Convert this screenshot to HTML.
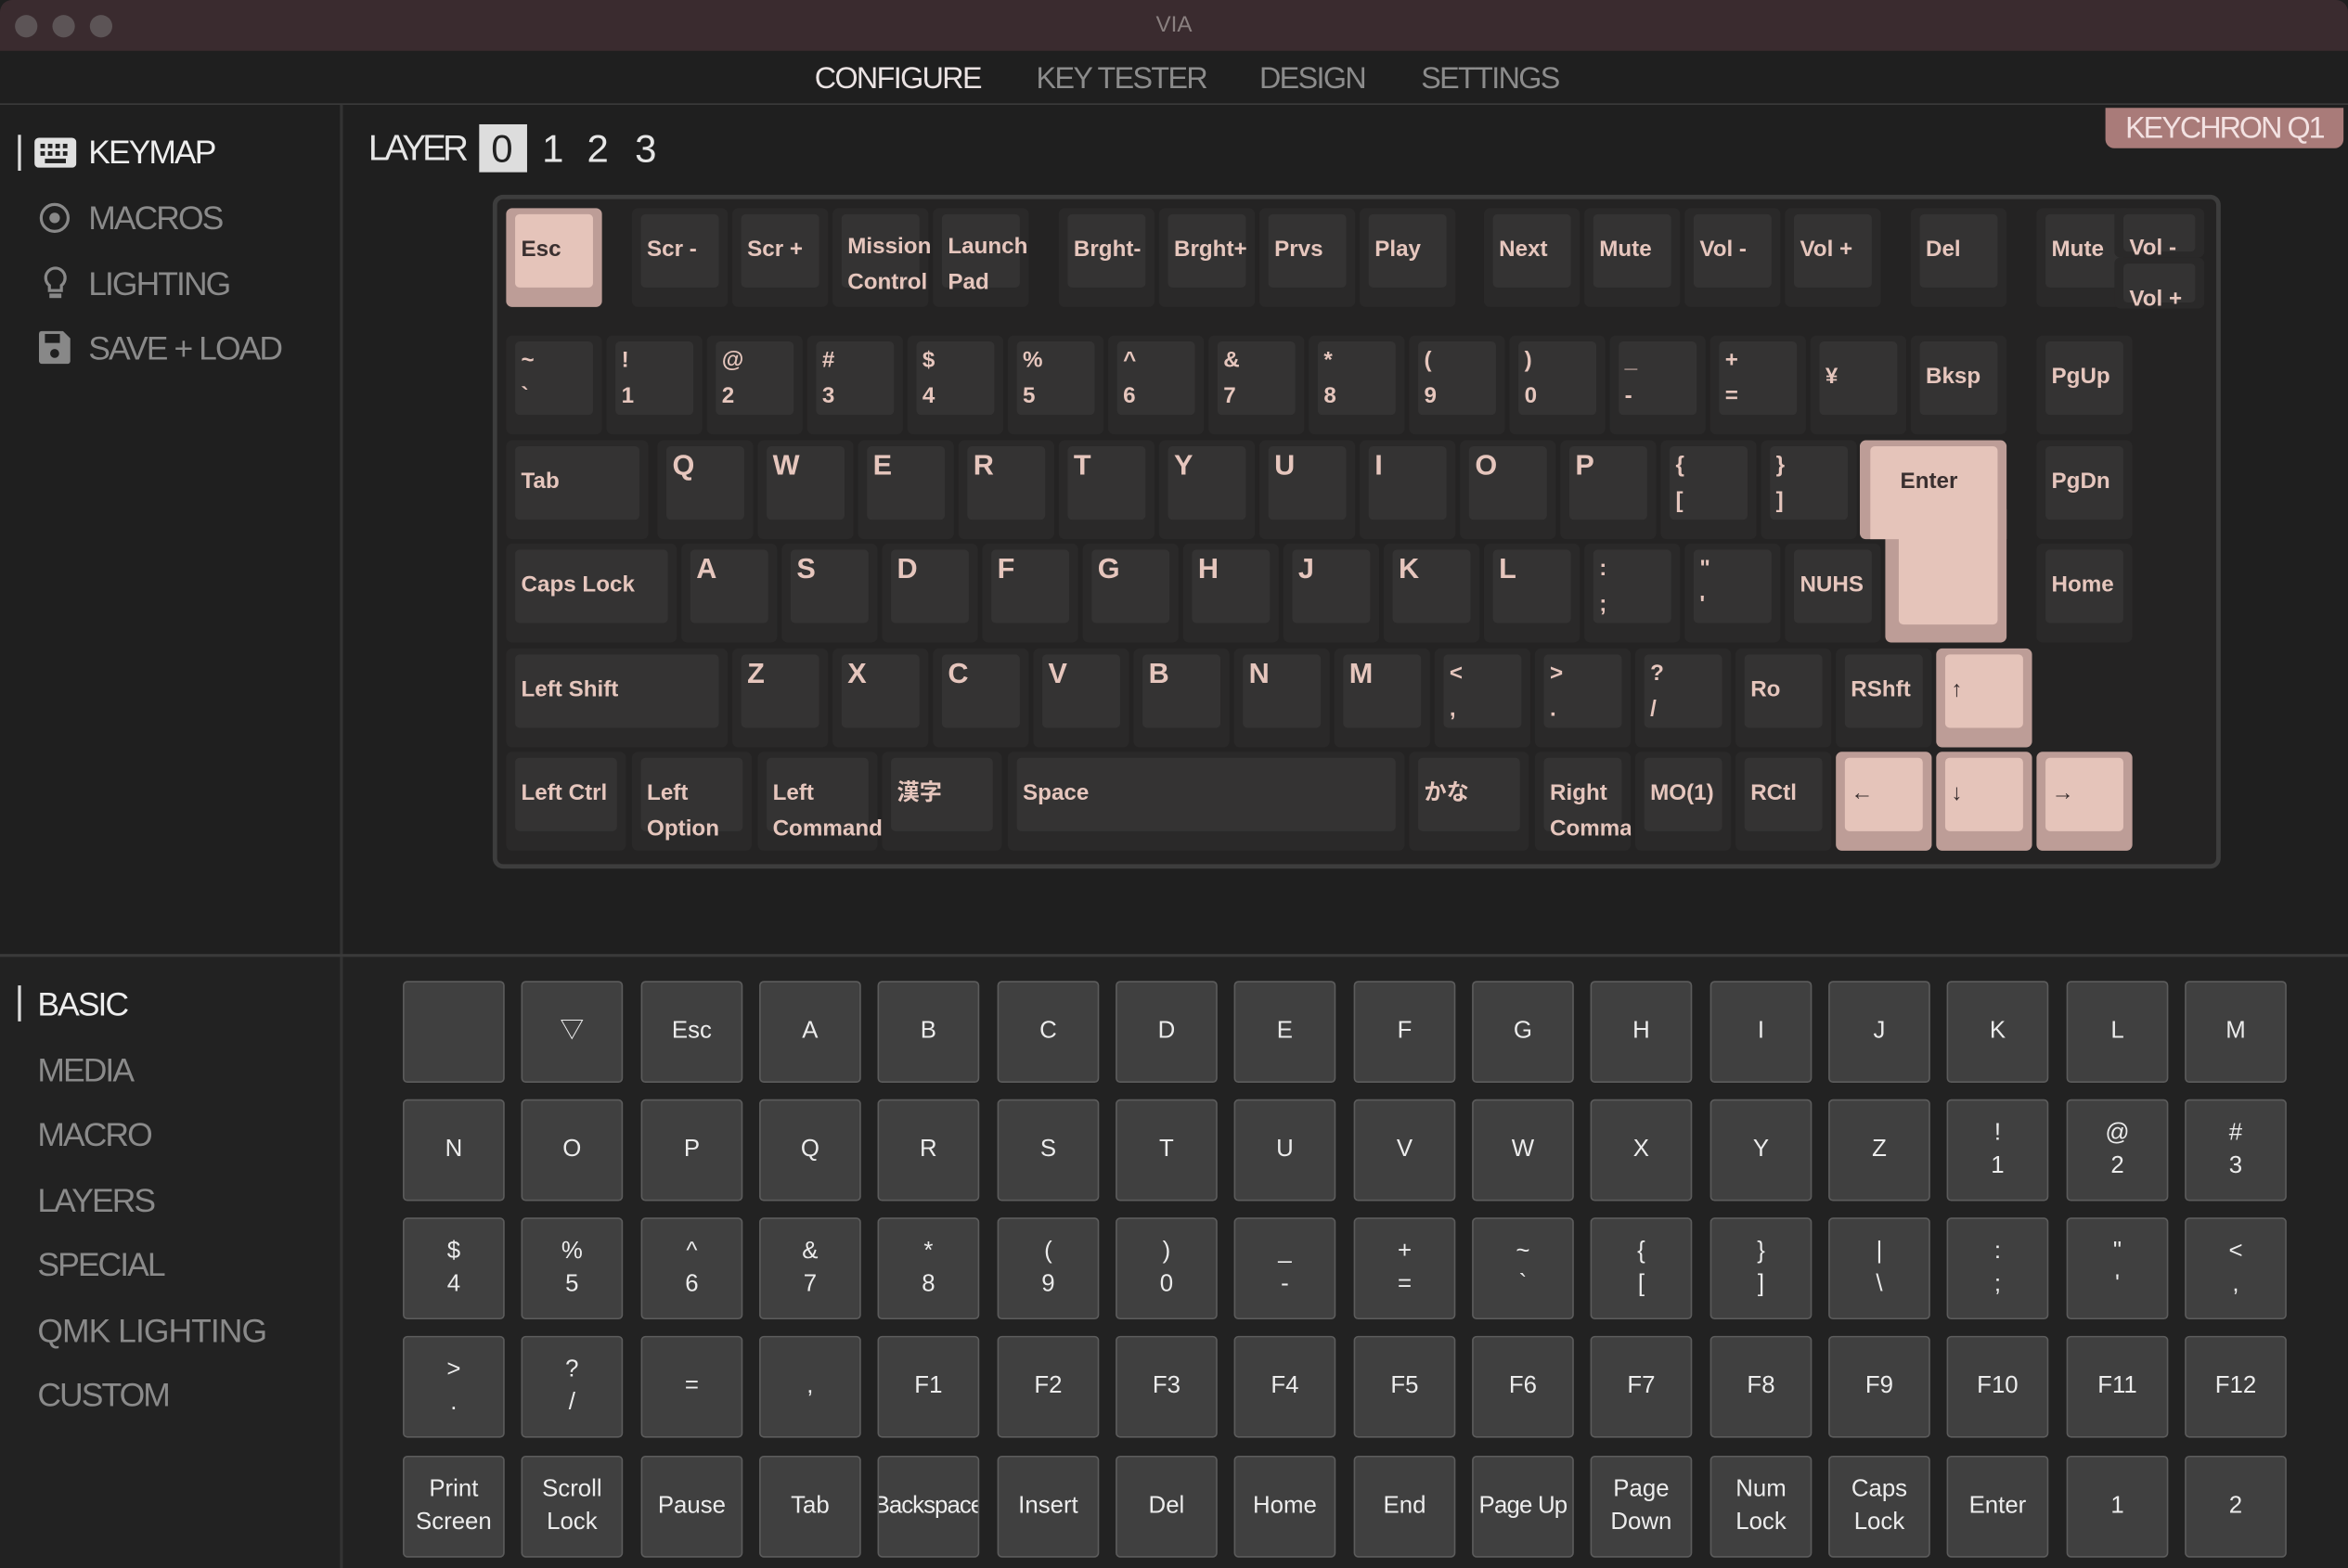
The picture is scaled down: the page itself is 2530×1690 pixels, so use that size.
<!DOCTYPE html>
<html><head><meta charset="utf-8"><style>
*{margin:0;padding:0;box-sizing:border-box}
html,body{width:2530px;height:1690px;overflow:hidden;background:#1e1e1e}
#w{position:absolute;left:0;top:0;width:1568px;height:1047px;transform:scale(1.61352,1.61414);transform-origin:0 0;font-family:"Liberation Sans","Noto Sans CJK JP",sans-serif;background:#1f1f1f}
.a{position:absolute}
.tb{left:0;top:0;width:1568px;height:34px;background:#3a2b2f;border-radius:8px 8px 0 0}
.dot{width:15px;height:15px;border-radius:50%;background:#5c5456;top:10px}
.nav{top:42px;font-size:20px;color:#8c8c8c;letter-spacing:-1px}
.side{font-size:22px;color:#8a8a8a;letter-spacing:-1.2px}
.k{position:absolute;height:66px;background:#2a2929;border-radius:4px}
.k>b{position:absolute;left:6px;right:6px;top:4px;bottom:13px;background:#343333;border-radius:3px}
.k>s{position:absolute;left:10px;text-decoration:none;color:#e6c6bd;font-weight:bold;font-size:15px;white-space:nowrap}
.k>s.c{top:18px;line-height:20px}
.k>s.d{top:5px;line-height:24px}
.k>s.l{top:7px;font-size:19px;line-height:22px}
.k.h{background:#bd9d97}.k.h>b{background:#e5c4ba}.k.h>s{color:#3a3030}
.g{position:absolute;width:68px;height:68px;background:#404040;border:1.5px solid #5c5c5c;border-radius:3px;color:#ececec;font-size:16px;display:flex;align-items:center;justify-content:center;text-align:center;line-height:22px}
</style></head><body><div id="w">
<div class="a tb"></div>
<div class="a dot" style="left:10px"></div><div class="a dot" style="left:35px"></div><div class="a dot" style="left:60px"></div>
<div class="a" style="left:0;width:1568px;top:8px;text-align:center;color:#8a8080;font-size:15px">VIA</div>
<div class="a" style="left:0;top:34px;width:1568px;height:36px;background:#1f1f1f;border-bottom:1.5px solid #3a3a3a"></div>
<div class="a nav" style="left:544px;color:#ebe3e3">CONFIGURE</div>
<div class="a nav" style="left:692px">KEY TESTER</div>
<div class="a nav" style="left:841px">DESIGN</div>
<div class="a nav" style="left:949px">SETTINGS</div>
<div class="a" style="left:227px;top:70px;width:1.5px;height:977px;background:#333"></div>
<div class="a" style="left:0;top:637px;width:1568px;height:1.5px;background:#3a3a3a"></div>
<div class="a" style="left:0;top:639px;width:1568px;height:408px;background:#222"></div>
<div class="a" style="left:227px;top:639px;width:1.5px;height:408px;background:#333"></div>
<!-- top sidebar -->
<div class="a" style="left:12px;top:90px;width:2px;height:24px;background:#ddd"></div>
<svg class="a" style="left:23px;top:92px" width="28" height="20" viewBox="0 0 28 20"><rect x="0" y="0" width="28" height="20" rx="3" fill="#e0e0e0"/><g fill="#222"><rect x="4" y="4" width="3" height="3"/><rect x="9" y="4" width="3" height="3"/><rect x="14" y="4" width="3" height="3"/><rect x="19" y="4" width="3" height="3"/><rect x="4" y="9" width="3" height="3"/><rect x="9" y="9" width="3" height="3"/><rect x="14" y="9" width="3" height="3"/><rect x="19" y="9" width="3" height="3"/><rect x="7" y="14" width="14" height="3"/></g></svg>
<div class="a side" style="left:59px;top:89px;color:#eee">KEYMAP</div>
<svg class="a" style="left:26px;top:135px" width="21" height="21" viewBox="0 0 21 21"><circle cx="10.5" cy="10.5" r="9" fill="none" stroke="#888" stroke-width="2"/><circle cx="10.5" cy="10.5" r="3.5" fill="#888"/></svg>
<div class="a side" style="left:59px;top:133px">MACROS</div>
<svg class="a" style="left:28px;top:177px" width="18" height="24" viewBox="0 0 18 24"><path d="M9 2a6.5 6.5 0 0 0-4 11.6V17h8v-3.4A6.5 6.5 0 0 0 9 2z" fill="none" stroke="#888" stroke-width="2"/><rect x="5" y="19" width="8" height="3" fill="#888"/></svg>
<div class="a side" style="left:59px;top:177px">LIGHTING</div>
<svg class="a" style="left:26px;top:221px" width="21" height="22" viewBox="0 0 21 22"><path d="M0 2a2 2 0 0 1 2-2h14l5 5v15a2 2 0 0 1-2 2H2a2 2 0 0 1-2-2z" fill="#888"/><rect x="4" y="2" width="10" height="6" fill="#1f1f1f"/><circle cx="10.5" cy="15" r="3" fill="#1f1f1f"/></svg>
<div class="a side" style="left:59px;top:220px">SAVE + LOAD</div>
<!-- bottom sidebar -->
<div class="a" style="left:12px;top:658px;width:2px;height:24px;background:#ddd"></div>
<div class="a side" style="left:25px;top:658px;color:#eee">BASIC</div>
<div class="a side" style="left:25px;top:702px">MEDIA</div>
<div class="a side" style="left:25px;top:745px">MACRO</div>
<div class="a side" style="left:25px;top:789px">LAYERS</div>
<div class="a side" style="left:25px;top:832px">SPECIAL</div>
<div class="a side" style="left:25px;top:876px;letter-spacing:-.6px">QMK LIGHTING</div>
<div class="a side" style="left:25px;top:919px">CUSTOM</div>
<!-- layer -->
<div class="a" style="left:246px;top:86px;font-size:24px;color:#e6e6e6;letter-spacing:-2.5px">LAYER</div>
<div class="a" style="left:320px;top:83px;width:32px;height:32px;background:#ddd"></div>
<div class="a" style="left:328px;top:84px;font-size:26px;color:#222">0</div>
<div class="a" style="left:362px;top:84px;font-size:26px;color:#e6e6e6">1</div>
<div class="a" style="left:392px;top:84px;font-size:26px;color:#e6e6e6">2</div>
<div class="a" style="left:424px;top:84px;font-size:26px;color:#e6e6e6">3</div>
<div class="a" style="left:1406px;top:72px;width:159px;height:27px;background:#a97b79;border-radius:0 0 6px 6px;color:#f3e2e2;font-size:20px;text-align:center;line-height:28px;letter-spacing:-1.2px">KEYCHRON Q1</div>
<!-- keyboard frame -->
<div class="a" style="left:329px;top:130px;width:1154px;height:450px;border:3px solid #3d3d3d;border-radius:7px;background:#242323"></div>
<!-- row 0 -->
<div class="k h" style="left:338px;top:139px;width:64px"><b></b><s class="c">Esc</s></div>
<div class="k" style="left:422px;top:139px;width:64px"><b></b><s class="c">Scr -</s></div>
<div class="k" style="left:489px;top:139px;width:64px"><b></b><s class="c">Scr +</s></div>
<div class="k" style="left:556px;top:139px;width:64px"><b></b><s class="d" style="top:14px">Mission<br>Control</s></div>
<div class="k" style="left:623px;top:139px;width:64px"><b></b><s class="d" style="top:14px">Launch<br>Pad</s></div>
<div class="k" style="left:707px;top:139px;width:64px"><b></b><s class="c">Brght-</s></div>
<div class="k" style="left:774px;top:139px;width:64px"><b></b><s class="c">Brght+</s></div>
<div class="k" style="left:841px;top:139px;width:64px"><b></b><s class="c">Prvs</s></div>
<div class="k" style="left:908px;top:139px;width:64px"><b></b><s class="c">Play</s></div>
<div class="k" style="left:991px;top:139px;width:64px"><b></b><s class="c">Next</s></div>
<div class="k" style="left:1058px;top:139px;width:64px"><b></b><s class="c">Mute</s></div>
<div class="k" style="left:1125px;top:139px;width:64px"><b></b><s class="c">Vol -</s></div>
<div class="k" style="left:1192px;top:139px;width:64px"><b></b><s class="c">Vol +</s></div>
<div class="k" style="left:1276px;top:139px;width:64px"><b></b><s class="c">Del</s></div>
<div class="k" style="left:1360px;top:139px;width:64px"><b></b><s class="c">Mute</s></div>
<div class="k" style="left:1412px;top:139px;width:60px;height:33px"><b style="bottom:4px"></b><s class="c" style="top:17px">Vol -</s></div>
<div class="k" style="left:1412px;top:172px;width:60px;height:34px"><b style="bottom:4px"></b><s class="c" style="top:18px">Vol +</s></div>
<!-- row 1 -->
<div class="k" style="left:338px;top:224px;width:64px"><b></b><s class="d">~<br>`</s></div>
<div class="k" style="left:405px;top:224px;width:64px"><b></b><s class="d">!<br>1</s></div>
<div class="k" style="left:472px;top:224px;width:64px"><b></b><s class="d">@<br>2</s></div>
<div class="k" style="left:539px;top:224px;width:64px"><b></b><s class="d">#<br>3</s></div>
<div class="k" style="left:606px;top:224px;width:64px"><b></b><s class="d">$<br>4</s></div>
<div class="k" style="left:673px;top:224px;width:64px"><b></b><s class="d">%<br>5</s></div>
<div class="k" style="left:740px;top:224px;width:64px"><b></b><s class="d">^<br>6</s></div>
<div class="k" style="left:807px;top:224px;width:64px"><b></b><s class="d">&amp;<br>7</s></div>
<div class="k" style="left:874px;top:224px;width:64px"><b></b><s class="d">*<br>8</s></div>
<div class="k" style="left:941px;top:224px;width:64px"><b></b><s class="d">(<br>9</s></div>
<div class="k" style="left:1008px;top:224px;width:64px"><b></b><s class="d">)<br>0</s></div>
<div class="k" style="left:1075px;top:224px;width:64px"><b></b><s class="d">_<br>-</s></div>
<div class="k" style="left:1142px;top:224px;width:64px"><b></b><s class="d">+<br>=</s></div>
<div class="k" style="left:1209px;top:224px;width:64px"><b></b><s class="c">¥</s></div>
<div class="k" style="left:1276px;top:224px;width:64px"><b></b><s class="c">Bksp</s></div>
<div class="k" style="left:1360px;top:224px;width:64px"><b></b><s class="c">PgUp</s></div>
<!-- row 2 -->
<div class="k" style="left:338px;top:294px;width:95px"><b></b><s class="c">Tab</s></div>
<div class="k" style="left:439px;top:294px;width:64px"><b></b><s class="l">Q</s></div>
<div class="k" style="left:506px;top:294px;width:64px"><b></b><s class="l">W</s></div>
<div class="k" style="left:573px;top:294px;width:64px"><b></b><s class="l">E</s></div>
<div class="k" style="left:640px;top:294px;width:64px"><b></b><s class="l">R</s></div>
<div class="k" style="left:707px;top:294px;width:64px"><b></b><s class="l">T</s></div>
<div class="k" style="left:774px;top:294px;width:64px"><b></b><s class="l">Y</s></div>
<div class="k" style="left:841px;top:294px;width:64px"><b></b><s class="l">U</s></div>
<div class="k" style="left:908px;top:294px;width:64px"><b></b><s class="l">I</s></div>
<div class="k" style="left:975px;top:294px;width:64px"><b></b><s class="l">O</s></div>
<div class="k" style="left:1042px;top:294px;width:64px"><b></b><s class="l">P</s></div>
<div class="k" style="left:1109px;top:294px;width:64px"><b></b><s class="d">{<br>[</s></div>
<div class="k" style="left:1176px;top:294px;width:64px"><b></b><s class="d">}<br>]</s></div>
<div class="k h" style="left:1242px;top:294px;width:98px;height:66px;border-radius:4px 4px 0 4px"></div>
<div class="k h" style="left:1259px;top:340px;width:81px;height:89px;border-radius:0 0 4px 4px"></div>
<div class="a" style="left:1249px;top:298px;width:85px;height:62px;background:#e5c4ba;border-radius:3px 3px 0 0"></div>
<div class="a" style="left:1268px;top:340px;width:66px;height:77px;background:#e5c4ba;border-radius:0 0 3px 3px"></div>
<div class="a" style="left:1269px;top:313px;color:#3a3030;font-weight:bold;font-size:15px">Enter</div>
<div class="k" style="left:1360px;top:294px;width:64px"><b></b><s class="c">PgDn</s></div>
<!-- row 3 -->
<div class="k" style="left:338px;top:363px;width:114px"><b></b><s class="c">Caps Lock</s></div>
<div class="k" style="left:455px;top:363px;width:64px"><b></b><s class="l">A</s></div>
<div class="k" style="left:522px;top:363px;width:64px"><b></b><s class="l">S</s></div>
<div class="k" style="left:589px;top:363px;width:64px"><b></b><s class="l">D</s></div>
<div class="k" style="left:656px;top:363px;width:64px"><b></b><s class="l">F</s></div>
<div class="k" style="left:723px;top:363px;width:64px"><b></b><s class="l">G</s></div>
<div class="k" style="left:790px;top:363px;width:64px"><b></b><s class="l">H</s></div>
<div class="k" style="left:857px;top:363px;width:64px"><b></b><s class="l">J</s></div>
<div class="k" style="left:924px;top:363px;width:64px"><b></b><s class="l">K</s></div>
<div class="k" style="left:991px;top:363px;width:64px"><b></b><s class="l">L</s></div>
<div class="k" style="left:1058px;top:363px;width:64px"><b></b><s class="d">:<br>;</s></div>
<div class="k" style="left:1125px;top:363px;width:64px"><b></b><s class="d">"<br>'</s></div>
<div class="k" style="left:1192px;top:363px;width:64px"><b></b><s class="c">NUHS</s></div>
<div class="k" style="left:1360px;top:363px;width:64px"><b></b><s class="c">Home</s></div>
<!-- row 4 -->
<div class="k" style="left:338px;top:433px;width:148px"><b></b><s class="c">Left Shift</s></div>
<div class="k" style="left:489px;top:433px;width:64px"><b></b><s class="l">Z</s></div>
<div class="k" style="left:556px;top:433px;width:64px"><b></b><s class="l">X</s></div>
<div class="k" style="left:623px;top:433px;width:64px"><b></b><s class="l">C</s></div>
<div class="k" style="left:690px;top:433px;width:64px"><b></b><s class="l">V</s></div>
<div class="k" style="left:757px;top:433px;width:64px"><b></b><s class="l">B</s></div>
<div class="k" style="left:824px;top:433px;width:64px"><b></b><s class="l">N</s></div>
<div class="k" style="left:891px;top:433px;width:64px"><b></b><s class="l">M</s></div>
<div class="k" style="left:958px;top:433px;width:64px"><b></b><s class="d">&lt;<br>,</s></div>
<div class="k" style="left:1025px;top:433px;width:64px"><b></b><s class="d">&gt;<br>.</s></div>
<div class="k" style="left:1092px;top:433px;width:64px"><b></b><s class="d">?<br>/</s></div>
<div class="k" style="left:1159px;top:433px;width:64px"><b></b><s class="c">Ro</s></div>
<div class="k" style="left:1226px;top:433px;width:64px"><b></b><s class="c">RShft</s></div>
<div class="k h" style="left:1293px;top:433px;width:64px"><b></b><s class="c">↑</s></div>
<!-- row 5 -->
<div class="k" style="left:338px;top:502px;width:80px"><b></b><s class="c">Left Ctrl</s></div>
<div class="k" style="left:422px;top:502px;width:80px"><b></b><s class="d" style="top:16px">Left<br>Option</s></div>
<div class="k" style="left:506px;top:502px;width:80px"><b></b><s class="d" style="top:16px">Left<br>Command</s></div>
<div class="k" style="left:589px;top:502px;width:80px"><b></b><s class="c">漢字</s></div>
<div class="k" style="left:673px;top:502px;width:265px"><b></b><s class="c">Space</s></div>
<div class="k" style="left:941px;top:502px;width:80px"><b></b><s class="c">かな</s></div>
<div class="k" style="left:1025px;top:502px;width:64px;overflow:hidden"><b></b><s class="d" style="top:16px">Right<br>Command</s></div>
<div class="k" style="left:1092px;top:502px;width:64px"><b></b><s class="c">MO(1)</s></div>
<div class="k" style="left:1159px;top:502px;width:64px"><b></b><s class="c">RCtl</s></div>
<div class="k h" style="left:1226px;top:502px;width:64px"><b></b><s class="c">←</s></div>
<div class="k h" style="left:1293px;top:502px;width:64px"><b></b><s class="c">↓</s></div>
<div class="k h" style="left:1360px;top:502px;width:64px"><b></b><s class="c">→</s></div>
<!-- bottom grid -->
<div class="g" style="left:269px;top:655px"></div><div class="g" style="left:348px;top:655px">▽</div><div class="g" style="left:428px;top:655px">Esc</div><div class="g" style="left:507px;top:655px">A</div><div class="g" style="left:586px;top:655px">B</div><div class="g" style="left:666px;top:655px">C</div><div class="g" style="left:745px;top:655px">D</div><div class="g" style="left:824px;top:655px">E</div><div class="g" style="left:904px;top:655px">F</div><div class="g" style="left:983px;top:655px">G</div><div class="g" style="left:1062px;top:655px">H</div><div class="g" style="left:1142px;top:655px">I</div><div class="g" style="left:1221px;top:655px">J</div><div class="g" style="left:1300px;top:655px">K</div><div class="g" style="left:1380px;top:655px">L</div><div class="g" style="left:1459px;top:655px">M</div>
<div class="g" style="left:269px;top:734px">N</div><div class="g" style="left:348px;top:734px">O</div><div class="g" style="left:428px;top:734px">P</div><div class="g" style="left:507px;top:734px">Q</div><div class="g" style="left:586px;top:734px">R</div><div class="g" style="left:666px;top:734px">S</div><div class="g" style="left:745px;top:734px">T</div><div class="g" style="left:824px;top:734px">U</div><div class="g" style="left:904px;top:734px">V</div><div class="g" style="left:983px;top:734px">W</div><div class="g" style="left:1062px;top:734px">X</div><div class="g" style="left:1142px;top:734px">Y</div><div class="g" style="left:1221px;top:734px">Z</div><div class="g" style="left:1300px;top:734px">!<br>1</div><div class="g" style="left:1380px;top:734px">@<br>2</div><div class="g" style="left:1459px;top:734px">#<br>3</div>
<div class="g" style="left:269px;top:813px">$<br>4</div><div class="g" style="left:348px;top:813px">%<br>5</div><div class="g" style="left:428px;top:813px">^<br>6</div><div class="g" style="left:507px;top:813px">&amp;<br>7</div><div class="g" style="left:586px;top:813px">*<br>8</div><div class="g" style="left:666px;top:813px">(<br>9</div><div class="g" style="left:745px;top:813px">)<br>0</div><div class="g" style="left:824px;top:813px">_<br>-</div><div class="g" style="left:904px;top:813px">+<br>=</div><div class="g" style="left:983px;top:813px">~<br>`</div><div class="g" style="left:1062px;top:813px">{<br>[</div><div class="g" style="left:1142px;top:813px">}<br>]</div><div class="g" style="left:1221px;top:813px">|<br>\</div><div class="g" style="left:1300px;top:813px">:<br>;</div><div class="g" style="left:1380px;top:813px">"<br>'</div><div class="g" style="left:1459px;top:813px">&lt;<br>,</div>
<div class="g" style="left:269px;top:892px">&gt;<br>.</div><div class="g" style="left:348px;top:892px">?<br>/</div><div class="g" style="left:428px;top:892px">=</div><div class="g" style="left:507px;top:892px">,</div><div class="g" style="left:586px;top:892px">F1</div><div class="g" style="left:666px;top:892px">F2</div><div class="g" style="left:745px;top:892px">F3</div><div class="g" style="left:824px;top:892px">F4</div><div class="g" style="left:904px;top:892px">F5</div><div class="g" style="left:983px;top:892px">F6</div><div class="g" style="left:1062px;top:892px">F7</div><div class="g" style="left:1142px;top:892px">F8</div><div class="g" style="left:1221px;top:892px">F9</div><div class="g" style="left:1300px;top:892px">F10</div><div class="g" style="left:1380px;top:892px">F11</div><div class="g" style="left:1459px;top:892px">F12</div>
<div class="g" style="left:269px;top:972px">Print<br>Screen</div><div class="g" style="left:348px;top:972px">Scroll<br>Lock</div><div class="g" style="left:428px;top:972px">Pause</div><div class="g" style="left:507px;top:972px">Tab</div><div class="g" style="left:586px;top:972px;overflow:hidden;letter-spacing:-.6px"><span style="white-space:nowrap">Backspace</span></div><div class="g" style="left:666px;top:972px">Insert</div><div class="g" style="left:745px;top:972px">Del</div><div class="g" style="left:824px;top:972px">Home</div><div class="g" style="left:904px;top:972px">End</div><div class="g" style="left:983px;top:972px;letter-spacing:-.5px">Page Up</div><div class="g" style="left:1062px;top:972px">Page<br>Down</div><div class="g" style="left:1142px;top:972px">Num<br>Lock</div><div class="g" style="left:1221px;top:972px">Caps<br>Lock</div><div class="g" style="left:1300px;top:972px">Enter</div><div class="g" style="left:1380px;top:972px">1</div><div class="g" style="left:1459px;top:972px">2</div>
</div></body></html>
